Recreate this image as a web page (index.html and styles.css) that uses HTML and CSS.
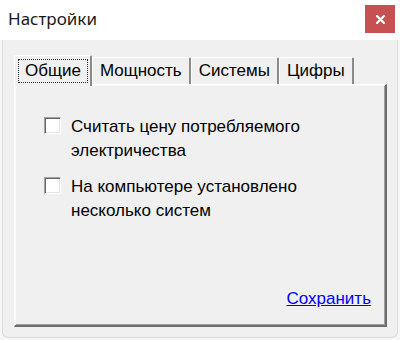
FILE: index.html
```html
<!DOCTYPE html>
<html lang="ru">
<head>
<meta charset="utf-8">
<title>Настройки</title>
<link rel="stylesheet" href="styles.css">
</head>
<body>
<div class="window">
  <div class="titlebar">
    <span class="title">Настройки</span>
    <button class="close" aria-label="Закрыть">
      <svg width="9" height="9" viewBox="0 0 9 9"><path d="M1 1 L8 8 M8 1 L1 8" stroke="#fff" stroke-width="2.2" stroke-linecap="square"/></svg>
    </button>
  </div>
  <div class="client">
    <div class="tabs">
      <div class="tab active"><span class="focus">Общие</span></div>
      <div class="tab">Мощность</div>
      <div class="tab">Системы</div>
      <div class="tab">Цифры</div>
    </div>
    <div class="panel">
      <label class="option">
        <span class="check"></span>
        <span class="label">Считать цену потребляемого<br>электричества</span>
      </label>
      <label class="option">
        <span class="check"></span>
        <span class="label">На компьютере установлено<br>несколько систем</span>
      </label>
      <a class="save" href="#">Сохранить</a>
    </div>
  </div>
</div>
</body>
</html>
```

FILE: styles.css
```css
* { box-sizing: border-box; }
html, body {
  margin: 0;
  padding: 0;
  width: 400px;
  height: 340px;
  background: #f7f7f7;
  overflow: hidden;
}
.window {
  width: 396px;
  height: 338px;
  margin: 0 2px;
  display: flex;
  flex-direction: column;
  background: #f0f0f0;
  border: 1px solid #dadada;
  border-top: none;
  border-radius: 0 0 6px 6px;
}
.titlebar {
  height: 40px;
  margin: 0 -3px;
  background: #fff;
  display: flex;
  align-items: flex-start;
  flex: none;
}
.title {
  font-family: "Noto Sans", sans-serif;
  font-size: 17px;
  color: #1a1a1a;
  margin: 7px 0 0 8px;
  line-height: 24px;
}
.close {
  margin: 5px 5px 0 auto;
  width: 30px;
  height: 28px;
  border: none;
  padding: 0;
  background: #c75050;
  display: flex;
  align-items: center;
  justify-content: center;
}
.client {
  flex: 1;
  display: flex;
  flex-direction: column;
  padding: 14px 10px 10px 11px;
  font-family: "Liberation Sans", Arial, sans-serif;
  font-size: 17px;
  color: #000;
}
.tabs {
  display: flex;
  align-items: flex-end;
  height: 30px;
  position: relative;
  z-index: 1;
}
.tab {
  height: 27px;
  padding: 0 7px;
  line-height: 25px;
  background: #f0f0f0;
  border-top: 1px solid #fff;
  border-left: 1px solid #fff;
  border-right: 2px solid #8a8a8a;
  border-top-left-radius: 2px;
  border-top-right-radius: 2px;
}
.tab.active {
  height: 31px;
  margin-bottom: -2px;
  padding: 3px 2px 0 3px;
  line-height: 22px;
}
.focus {
  display: block;
  padding: 0 6px;
  border: 1px dotted #333;
}
.panel {
  flex: 1;
  display: flex;
  flex-direction: column;
  align-items: flex-start;
  padding: 30px 14px 14px 29px;
  border-top: 1px solid #fff;
  border-left: 1px solid #fff;
  border-right: 2px solid #6e6e6e;
  border-bottom: 2px solid #6e6e6e;
  box-shadow: inset 1px 1px 0 #f8f8f8, inset -1px -1px 0 #a0a0a0;
}
.option {
  display: flex;
  align-items: flex-start;
  gap: 10px;
  line-height: 24px;
  margin-bottom: 12px;
}
.check {
  flex: none;
  width: 17px;
  height: 17px;
  margin-top: 2px;
  background: #fff;
  border-top: 1px solid #a0a0a0;
  border-left: 1px solid #a0a0a0;
  border-bottom: 1px solid #fff;
  border-right: 1px solid #fff;
  box-shadow: inset 1px 1px 0 #696969, inset -1px -1px 0 #e3e3e3;
}
.save {
  margin-top: auto;
  align-self: flex-end;
  color: #0000ff;
  line-height: 24px;
  text-decoration: underline;
}
```
